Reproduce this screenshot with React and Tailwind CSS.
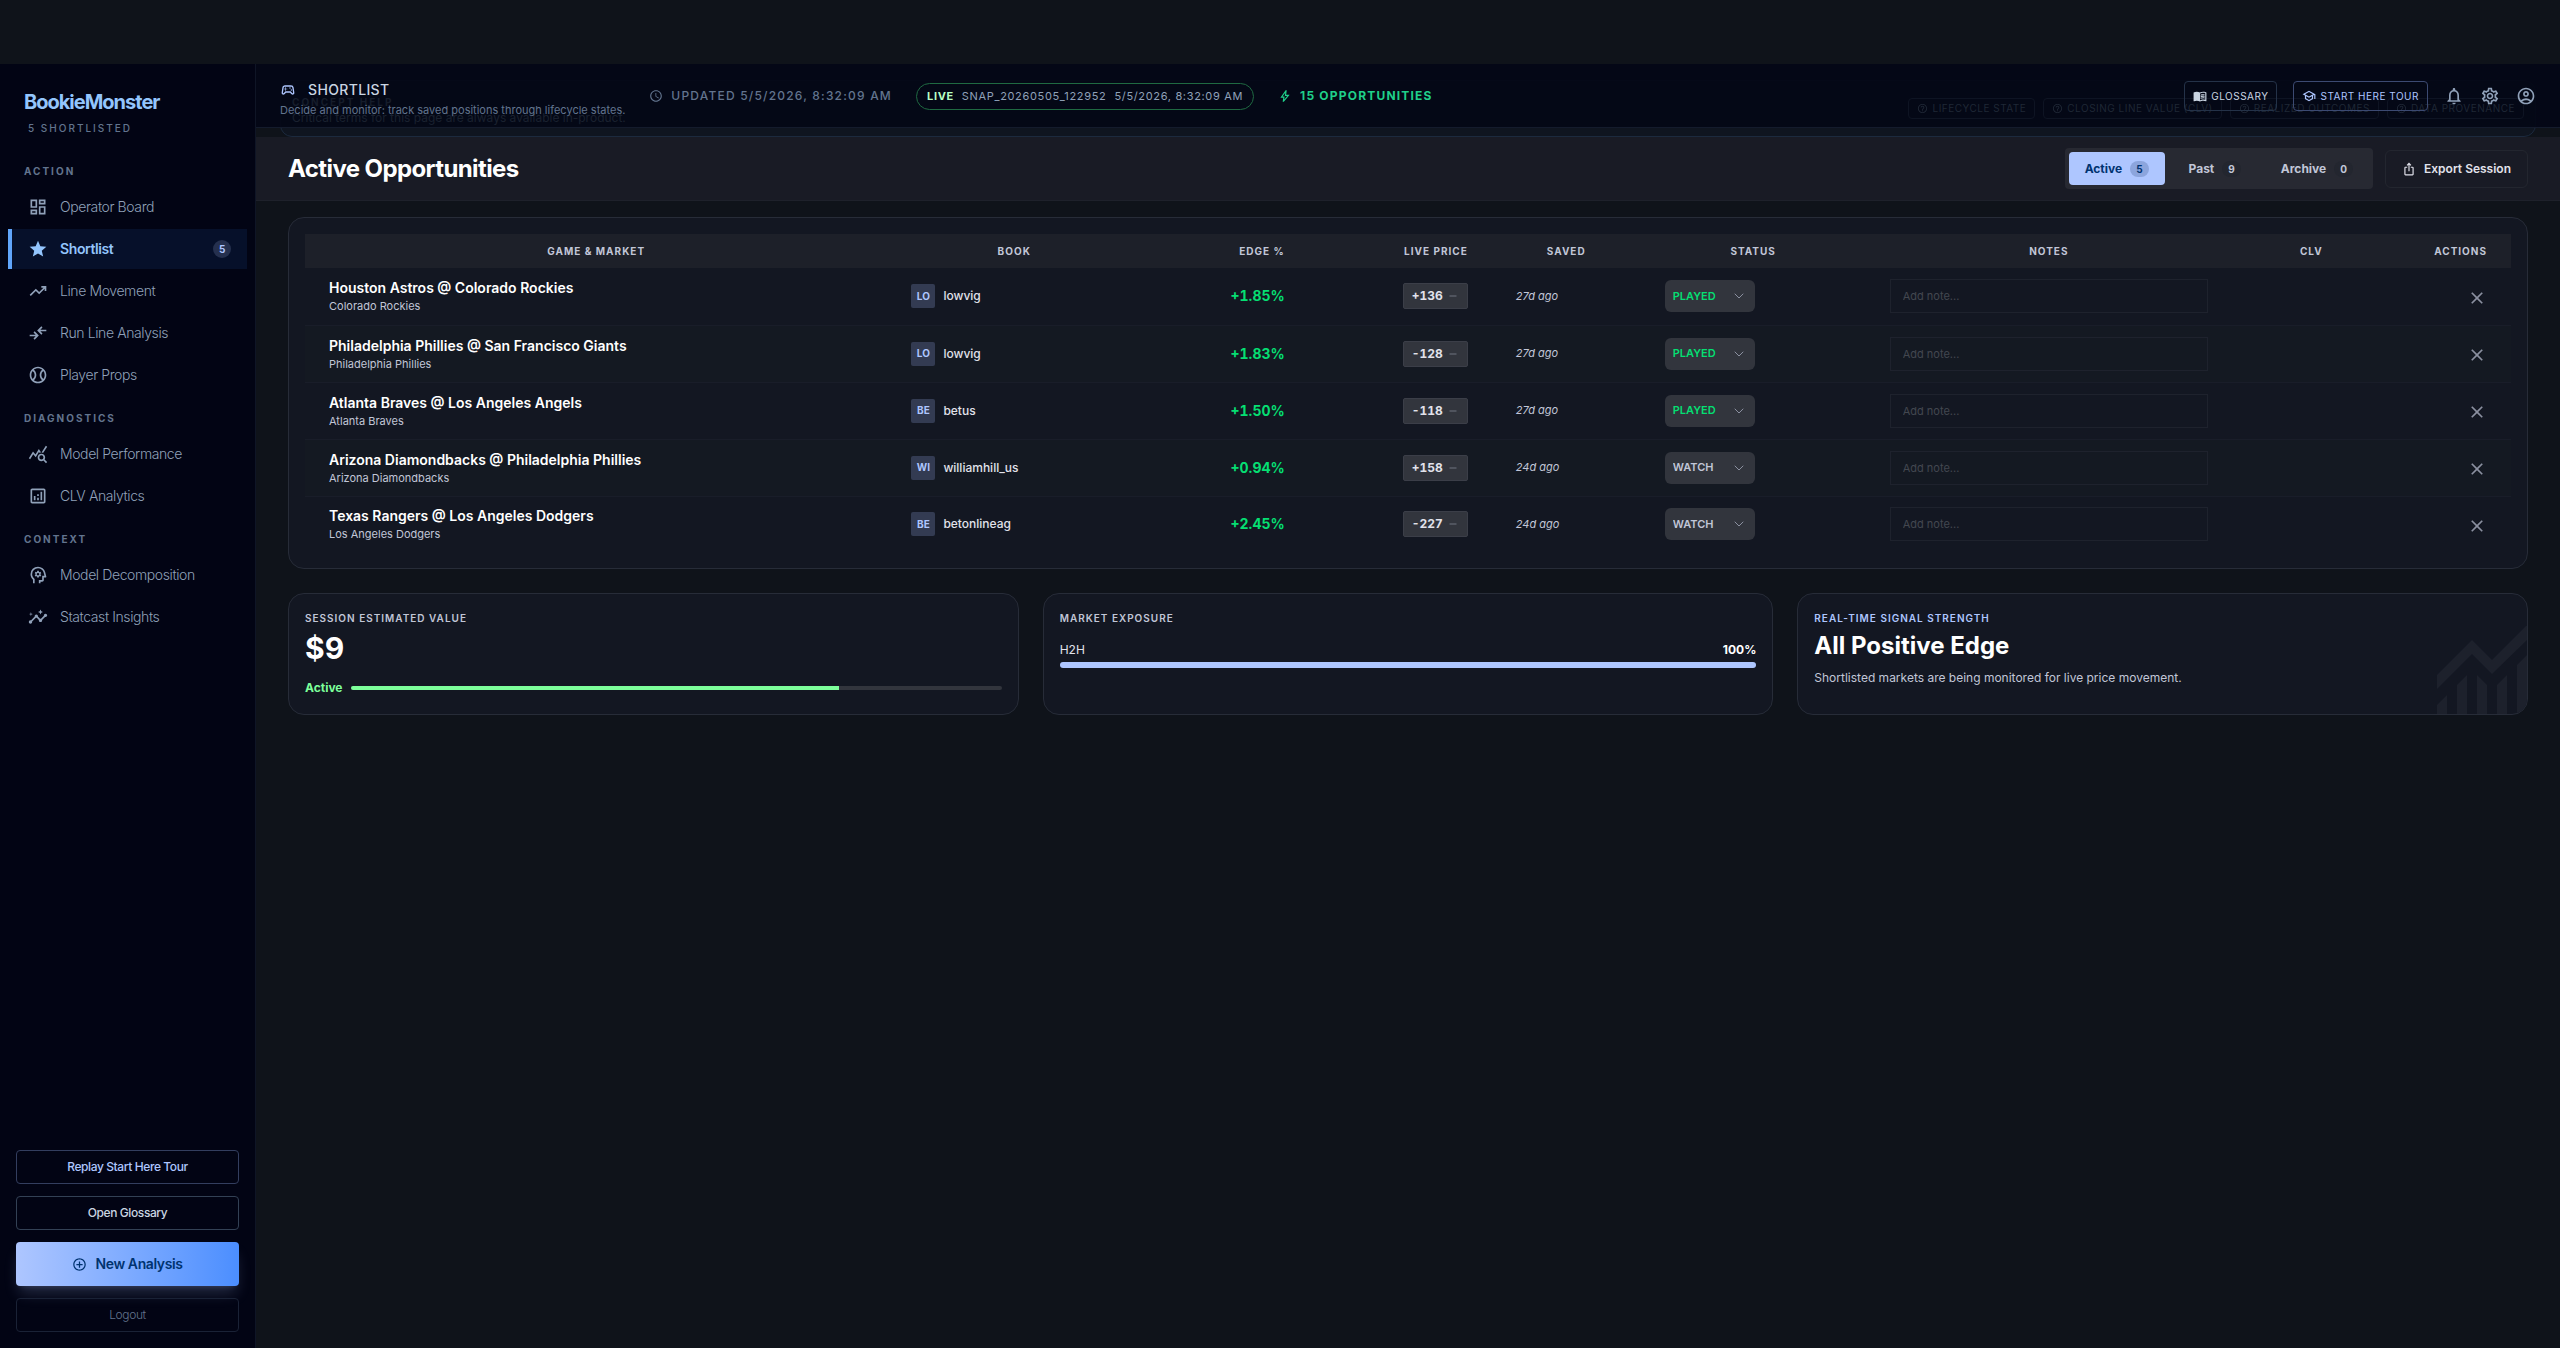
import React from 'react';
import { ChevronDown } from 'lucide-react';
import {
  MdAddCircleOutline, MdClose, MdOutlineAccountCircle, MdOutlineAnalytics, MdOutlineDashboard,
  MdOutlineHelpOutline, MdOutlineInsights, MdOutlineIosShare, MdOutlineMenuBook, MdOutlineNotifications,
  MdOutlineQueryStats, MdOutlineSchedule, MdOutlineSchool, MdOutlineSettings, MdOutlineSportsBaseball,
  MdOutlineSportsEsports, MdRemove, MdStar,
} from 'react-icons/md';

// Outlined glyphs that the icon package only has in a heavier cut
const Glyph = ({ size = 20, d }) => (
  <svg width={size} height={size} viewBox="0 -960 960 960" fill="currentColor">
    <path d={d} />
  </svg>
);

const TrendingUp = ({ size }) => (
  <Glyph size={size} d="m136-240-56-56 296-298 160 160 208-206H640v-80h240v240h-80v-104L536-320 376-480 136-240Z" />
);

const CompareArrows = ({ size }) => (
  <Glyph size={size} d="m320-160-56-57 103-103H80v-80h287L264-503l56-57 200 200-200 200Zm320-240L440-600l200-200 56 57-103 103h287v80H593l103 103-56 57Z" />
);

const Bolt = ({ size }) => (
  <Glyph size={size} d="m422-232 207-248H469l29-227-185 267h139l-30 208ZM320-80l40-280H160l360-520h80l-40 320h240L400-80h-80Z" />
);

const Psychology = ({ size }) => (
  <Glyph
    size={size}
    d="M240-80v-172q-57-52-88.500-121.500T120-520q0-150 105-255t255-105q125 0 221.500 73.500T827-615l52 205q5 19-7 34.500T840-360h-80v120q0 33-23.500 56.500T680-160h-80v80h-80v-160h160v-200h108l-38-155q-23-91-98-148t-172-57q-116 0-198 81t-82 197q0 60 24.500 114t69.500 96l26 24v208h-80Zm200-280h80l6-50q8-3 14.500-7t11.500-9l46 20 40-68-40-30q2-8 2-16t-2-16l40-30-40-68-46 20q-5-5-11.500-9t-14.500-7l-6-50h-80l-6 50q-8 3-14.500 7t-11.500 9l-46-20-40 68 40 30q-2 8-2 16t2 16l-40 30 40 68 46-20q5 5 11.500 9t14.500 7l6 50Zm40-100q-25 0-42.500-17.500T420-520q0-25 17.500-42.500T480-580q25 0 42.500 17.500T540-520q0 25-17.500 42.500T480-460Z"
  />
);

const navGroups = [
  {
    title: 'Action',
    items: [
      { label: 'Operator Board', icon: MdOutlineDashboard },
      { label: 'Shortlist', icon: MdStar, active: true, count: 5 },
      { label: 'Line Movement', icon: TrendingUp },
      { label: 'Run Line Analysis', icon: CompareArrows },
      { label: 'Player Props', icon: MdOutlineSportsBaseball },
    ],
  },
  {
    title: 'Diagnostics',
    items: [
      { label: 'Model Performance', icon: MdOutlineQueryStats },
      { label: 'CLV Analytics', icon: MdOutlineAnalytics },
    ],
  },
  {
    title: 'Context',
    items: [
      { label: 'Model Decomposition', icon: Psychology },
      { label: 'Statcast Insights', icon: MdOutlineInsights },
    ],
  },
];

const concepts = ['Lifecycle State', 'Closing Line Value (CLV)', 'Realized Outcomes', 'Data Provenance'];

const picks = [
  { game: 'Houston Astros @ Colorado Rockies', team: 'Colorado Rockies', book: 'lowvig', edge: '+1.85%', price: '+136', saved: '27d ago', status: 'played' },
  { game: 'Philadelphia Phillies @ San Francisco Giants', team: 'Philadelphia Phillies', book: 'lowvig', edge: '+1.83%', price: '-128', saved: '27d ago', status: 'played' },
  { game: 'Atlanta Braves @ Los Angeles Angels', team: 'Atlanta Braves', book: 'betus', edge: '+1.50%', price: '-118', saved: '27d ago', status: 'played' },
  { game: 'Arizona Diamondbacks @ Philadelphia Phillies', team: 'Arizona Diamondbacks', book: 'williamhill_us', edge: '+0.94%', price: '+158', saved: '24d ago', status: 'watch' },
  { game: 'Texas Rangers @ Los Angeles Dodgers', team: 'Los Angeles Dodgers', book: 'betonlineag', edge: '+2.45%', price: '-227', saved: '24d ago', status: 'watch' },
];

const tabs = [
  { label: 'Active', count: 5, active: true },
  { label: 'Past', count: 9 },
  { label: 'Archive', count: 0 },
];

const Sidebar = () => (
  <aside className="flex w-64 shrink-0 flex-col border-r border-[#0f1526] bg-[#020414] tracking-tight">
    <div className="px-6 pt-6">
      <h1 className="text-xl leading-7 font-bold tracking-tighter text-[#93c5fd]">BookieMonster</h1>
      <p className="mt-1 pl-1 text-[10px] leading-4 font-medium tracking-[2px] text-slate-500 uppercase">5 Shortlisted</p>
    </div>
    <nav className="mt-6 flex flex-col gap-3">
      {navGroups.map((group) => (
        <div key={group.title}>
          <h2 className="px-6 pt-1 text-[10px] leading-[15px] font-bold tracking-[2px] text-slate-500 uppercase">{group.title}</h2>
          <div className="mt-2 flex flex-col gap-0.5 px-2">
            {group.items.map((item) => (
              <a
                key={item.label}
                href="#"
                className={`flex h-10 items-center gap-3 border-l-4 pr-4 pl-4 text-sm ${
                  item.active ? 'border-[#60a5fa] bg-[#06102a] font-semibold text-[#93c5fd]' : 'border-transparent font-light text-slate-400'
                }`}
              >
                <item.icon size={20} />
                <span>{item.label}</span>
                {item.count && (
                  <span className="ml-auto rounded-full bg-[#25304e] px-1.5 text-[10px] leading-[18px] font-bold text-[#aec6ff]">{item.count}</span>
                )}
              </a>
            ))}
          </div>
        </div>
      ))}
    </nav>
    <div className="mt-auto flex flex-col gap-3 p-4">
      <button className="h-[34px] rounded border border-[#333e5f] text-xs font-medium text-[#aec6ff]">Replay Start Here Tour</button>
      <button className="h-[34px] rounded border border-[#334155] text-xs font-medium text-slate-300">Open Glossary</button>
      <button className="flex h-11 items-center justify-center gap-2 rounded bg-linear-to-r from-[#aec6ff] to-[#4b8eff] text-sm font-semibold text-[#003370] shadow-lg shadow-[#aec6ff]/20">
        <MdAddCircleOutline size={15} />
        New Analysis
      </button>
      <button className="h-[34px] rounded border border-[#1a2236] text-xs font-light text-slate-500">Logout</button>
    </div>
  </aside>
);

const TopBar = () => (
  <header className="relative h-16 bg-[#030614]">
    {/* Help panel that has scrolled beneath the translucent bar */}
    <div className="absolute inset-x-6 top-4 h-[57px] rounded-xl border border-[#1c2a3e] bg-[#0f1520]" />
    <div className="absolute inset-0 flex items-start justify-between border-b border-[#141b2c] bg-[#040716]/95 px-9 pt-8">
      <div>
        <p className="text-[10px] leading-3 font-bold tracking-[2px] text-[#161d2b] uppercase">Concept Help</p>
        <p className="mt-0.5 text-xs leading-4 text-[#1a212f]">Critical terms for this page are always available in-product.</p>
      </div>
      <div className="flex gap-2 pt-0.5">
        {concepts.map((concept) => (
          <span key={concept} className="flex h-[21px] items-center gap-1 rounded-sm border border-[#0e1423] px-2 text-[10px] tracking-wider text-[#1f2735] uppercase">
            <MdOutlineHelpOutline size={11} />
            {concept}
          </span>
        ))}
      </div>
    </div>
    <div className="relative flex h-full items-center px-6">
      <div className="flex items-center gap-6">
        <div className="pt-1.5">
          <div className="flex items-center gap-3">
            <MdOutlineSportsEsports size={16} className="text-[#aec6ff]" />
            <span className="text-sm leading-5 font-medium tracking-wide text-slate-300 uppercase">Shortlist</span>
          </div>
          <p className="mt-0.5 text-[11px] leading-4 text-slate-500">Decide and monitor: track saved positions through lifecycle states.</p>
        </div>
        <span className="flex items-center gap-2 text-xs font-medium tracking-widest text-slate-500 uppercase">
          <MdOutlineSchedule size={14} />
          Updated 5/5/2026, 8:32:09 AM
        </span>
        <span className="flex h-[27px] items-center gap-2 rounded-full border border-[#1f6a42] px-2.5 text-[11px] tracking-[0.06em] text-slate-400">
          <b className="text-[#b7ffc4]">LIVE</b>
          <span>SNAP_20260505_122952</span>
          <span>5/5/2026, 8:32:09 AM</span>
        </span>
        <span className="flex items-center gap-2 text-xs font-bold tracking-widest text-[#1fd08a] uppercase">
          <Bolt size={14} />
          15 Opportunities
        </span>
      </div>
      <div className="ml-auto flex items-center gap-4 text-slate-400">
        <button className="flex h-[30px] items-center gap-1 rounded border border-[#243248] px-2 text-[10px] tracking-wider text-slate-300 uppercase">
          <MdOutlineMenuBook size={14} />
          Glossary
        </button>
        <button className="flex h-[30px] items-center gap-1 rounded border border-[#3c4a72] px-2 text-[10px] tracking-wider text-[#aec6ff] uppercase">
          <MdOutlineSchool size={14} />
          Start Here Tour
        </button>
        <button aria-label="Notifications"><MdOutlineNotifications size={20} /></button>
        <button aria-label="Settings"><MdOutlineSettings size={20} /></button>
        <button aria-label="Account"><MdOutlineAccountCircle size={20} /></button>
      </div>
    </div>
  </header>
);

const PickRow = ({ pick, striped }) => (
  <tr className={`h-[57px] border-b border-[#191d29] last:h-14 last:border-b-0 ${striped ? 'bg-[#141922]' : ''}`}>
    <td className="px-6">
      <div className="text-sm leading-5 font-semibold text-white">{pick.game}</div>
      <div className="text-[11px] leading-4 text-[#c1c6d7]">{pick.team}</div>
    </td>
    <td className="px-6">
      <div className="flex items-center gap-2">
        <span className="flex size-6 items-center justify-center rounded-xs bg-[#333b52] text-[10px] font-bold text-[#aec6ff]">
          {pick.book.slice(0, 2).toUpperCase()}
        </span>
        <span className="text-xs font-medium text-[#e1e2eb]">{pick.book}</span>
      </div>
    </td>
    <td className="px-6 text-right text-sm font-bold text-[#05df72] tabular-nums">{pick.edge}</td>
    <td className="px-6">
      <div className="flex justify-end">
        <span className="flex h-[26px] items-center gap-1 rounded-xs border border-[#3b3e48] bg-[#32353d] px-2 text-xs font-bold text-[#e1e2eb] tabular-nums">
          {pick.price}
          <MdRemove size={12} className="text-[#6f7480]" />
        </span>
      </div>
    </td>
    <td className="px-6 text-[11px] text-[#c1c6d7] italic">{pick.saved}</td>
    <td className="px-6">
      <div className="relative w-[90px]">
        <select
          aria-label={`Status of ${pick.game}`}
          defaultValue={pick.status}
          className={`block h-8 w-full appearance-none rounded-md bg-[#32353d] px-2 text-[11px] font-semibold uppercase ${
            pick.status === 'played' ? 'text-[#05df72]' : 'text-[#c1c6d7]'
          }`}
        >
          <option value="played">PLAYED</option>
          <option value="watch">WATCH</option>
        </select>
        <ChevronDown size={16} strokeWidth={1.5} className="pointer-events-none absolute top-2 right-2 text-[#8b90a0]" />
      </div>
    </td>
    <td className="px-6">
      <input
        type="text"
        aria-label={`Note for ${pick.game}`}
        placeholder="Add note..."
        className="block h-[34px] w-full border border-[#1e222d] px-3 text-[11px] text-white placeholder:text-[#434750]"
      />
    </td>
    <td className="px-6" />
    <td className="px-6 text-right">
      <button aria-label={`Remove ${pick.game}`} className="align-middle text-[#8b90a0]"><MdClose size={20} /></button>
    </td>
  </tr>
);

const PicksTable = () => (
  <section className="mt-4 rounded-2xl border border-[#272c38] bg-[#131722] p-4">
    <table className="w-full table-fixed">
      <colgroup>
        <col className="w-[26.4%]" />
        <col className="w-[11.5%]" />
        <col className="w-[7.6%]" />
        <col className="w-[8.3%]" />
        <col className="w-[6.75%]" />
        <col className="w-[10.2%]" />
        <col className="w-[16.6%]" />
        <col className="w-[7.2%]" />
        <col />
      </colgroup>
      <thead>
        <tr className="h-[34px] bg-[#1d2029] text-[10px] font-bold tracking-widest text-[#c1c6d7] uppercase">
          <th className="px-6">Game &amp; Market</th>
          <th className="px-6">Book</th>
          <th className="px-6 text-right">Edge %</th>
          <th className="px-6 text-right whitespace-nowrap">Live Price</th>
          <th className="px-6">Saved</th>
          <th className="px-6">Status</th>
          <th className="px-6">Notes</th>
          <th className="px-6">CLV</th>
          <th className="px-6 text-right">Actions</th>
        </tr>
      </thead>
      <tbody>
        {picks.map((pick, i) => (
          <PickRow key={pick.game} pick={pick} striped={i % 2 === 1} />
        ))}
      </tbody>
    </table>
  </section>
);

const cardClass = 'min-h-[121px] rounded-2xl border border-[#272c38] bg-[#131722] p-4';
const cardTitle = 'text-[10px] leading-4 font-semibold tracking-widest uppercase';

const SummaryCards = () => (
  <section className="mt-6 grid grid-cols-3 gap-6">
    <div className={cardClass}>
      <h3 className={`${cardTitle} text-[#c1c6d7]`}>Session Estimated Value</h3>
      <p className="mt-1 text-3xl leading-9 font-bold text-white">$9</p>
      <div className="mt-3 flex items-center gap-2">
        <span className="text-xs leading-5 font-bold text-[#7dff9b]">Active</span>
        <div className="h-1 flex-1 overflow-hidden rounded-full bg-[#32353d]">
          <div className="h-full w-3/4 bg-[#7dff9b]" />
        </div>
      </div>
    </div>
    <div className={cardClass}>
      <h3 className={`${cardTitle} text-[#c1c6d7]`}>Market Exposure</h3>
      <div className="mt-4 flex justify-between text-xs leading-4">
        <span className="text-[#e1e2eb]">H2H</span>
        <span className="font-bold text-white">100%</span>
      </div>
      <div className="mt-1 h-1.5 rounded-full bg-[#aec6ff]" />
    </div>
    <div className={`${cardClass} relative overflow-hidden`}>
      <h3 className={`${cardTitle} text-[#aec6ff]`}>Real-Time Signal Strength</h3>
      <p className="mt-1 text-2xl leading-8 font-bold text-white">All Positive Edge</p>
      <p className="mt-2 text-xs leading-4 text-[#c1c6d7]">Shortlisted markets are being monitored for live price movement.</p>
      <svg className="absolute right-0 bottom-0 text-[#1d212c]" width="90" height="88" viewBox="0 0 90 88" fill="currentColor">
        <path d="M0 49 35 14 55 34 90 -1v15L55 48 35 28 0 63ZM0 79l10-10v19H0ZM20 59l10-10v39H20ZM40 49l10 10v29H40ZM60 59l10-10v39H60ZM80 39l10-10v59H80Z" />
      </svg>
    </div>
  </section>
);

const App = () => (
  <div className="min-h-screen bg-[#0f131a] pt-16 font-['Inter',sans-serif] text-slate-300">
    <div className="flex min-h-[calc(100vh-64px)]">
      <Sidebar />
      <div className="min-w-0 flex-1">
        <TopBar />
        <div className="mt-[9px] flex h-16 items-center justify-between border-b border-[#1e212b] bg-[#191b25] px-8">
          <h2 className="text-2xl font-bold tracking-tight text-white">Active Opportunities</h2>
          <div className="flex items-center gap-3">
            <div className="flex gap-2 rounded bg-[#272932] p-1">
              {tabs.map((tab) => (
                <button
                  key={tab.label}
                  className={`flex h-[33px] items-center gap-2 rounded px-4 text-xs font-bold ${
                    tab.active ? 'bg-[#aec6ff] text-[#003370]' : 'text-[#c1c6d7]'
                  }`}
                >
                  {tab.label}
                  <span className={`rounded-full px-1.5 text-[10px] leading-4 ${tab.active ? 'bg-[#8ca5dd]' : 'bg-[#23262f]'}`}>{tab.count}</span>
                </button>
              ))}
            </div>
            <button className="flex h-[38px] items-center gap-2 rounded-md border border-[#23262f] px-4 text-xs font-semibold text-[#e1e2eb]">
              <MdOutlineIosShare size={14} />
              Export Session
            </button>
          </div>
        </div>
        <main className="px-8 pb-8">
          <PicksTable />
          <SummaryCards />
        </main>
      </div>
    </div>
  </div>
);

export default App;
